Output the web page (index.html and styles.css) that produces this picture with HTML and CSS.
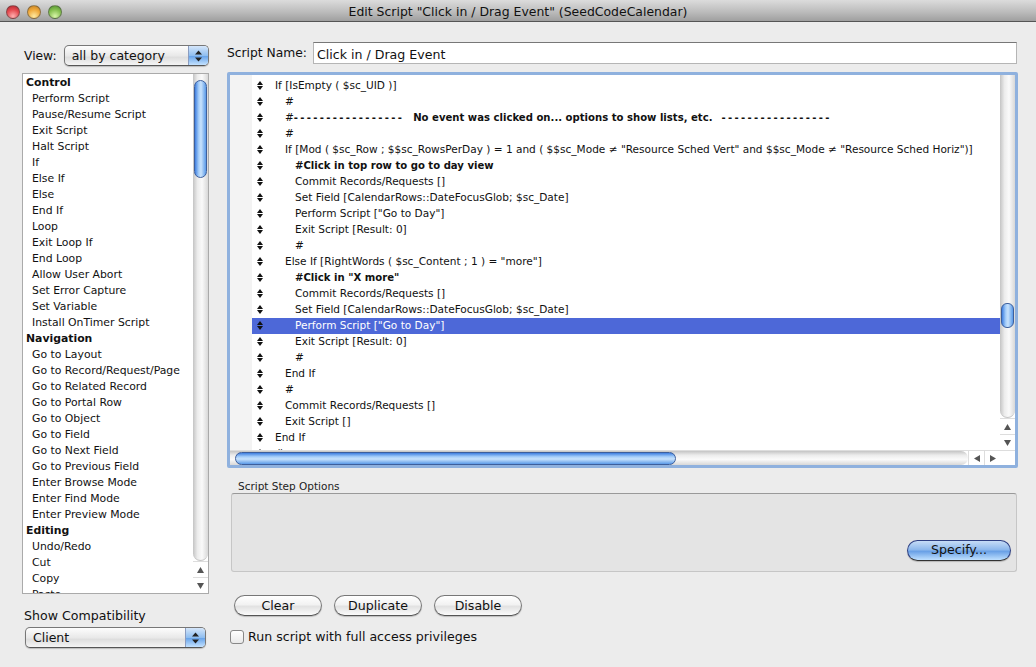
FILE: index.html
```html
<!DOCTYPE html>
<html lang="en">
<head>
<meta charset="utf-8">
<title>Edit Script</title>
<link rel="stylesheet" href="styles.css">
</head>
<body>
<div class="window">
  <header class="titlebar">
    <div class="lights"><span class="light red"></span><span class="light yellow"></span><span class="light green"></span></div>
    <div class="title">Edit Script "Click in / Drag Event" (SeedCodeCalendar)</div>
  </header>
  <main class="content">
    <aside class="left">
      <div class="view-row">
        <span class="label">View:</span>
        <div class="select select-view"><span class="select-text">all by category</span><span class="stepper"><svg width="9" height="14" viewBox="0 0 9 14"><path d="M4.5 1.5 8 5.5H1zM4.5 12.5 8 8.5H1z" fill="#222"/></svg></span></div>
      </div>
      <div class="list">
        <div class="list-items">
          <div class="cat">Control</div>
          <div class="item">Perform Script</div>
          <div class="item">Pause/Resume Script</div>
          <div class="item">Exit Script</div>
          <div class="item">Halt Script</div>
          <div class="item">If</div>
          <div class="item">Else If</div>
          <div class="item">Else</div>
          <div class="item">End If</div>
          <div class="item">Loop</div>
          <div class="item">Exit Loop If</div>
          <div class="item">End Loop</div>
          <div class="item">Allow User Abort</div>
          <div class="item">Set Error Capture</div>
          <div class="item">Set Variable</div>
          <div class="item">Install OnTimer Script</div>
          <div class="cat">Navigation</div>
          <div class="item">Go to Layout</div>
          <div class="item">Go to Record/Request/Page</div>
          <div class="item">Go to Related Record</div>
          <div class="item">Go to Portal Row</div>
          <div class="item">Go to Object</div>
          <div class="item">Go to Field</div>
          <div class="item">Go to Next Field</div>
          <div class="item">Go to Previous Field</div>
          <div class="item">Enter Browse Mode</div>
          <div class="item">Enter Find Mode</div>
          <div class="item">Enter Preview Mode</div>
          <div class="cat">Editing</div>
          <div class="item">Undo/Redo</div>
          <div class="item">Cut</div>
          <div class="item">Copy</div>
          <div class="item">Paste</div>
        </div>
        <div class="vscroll vscroll-list">
          <div class="track"><div class="thumb thumb-list"></div></div>
          <div class="arrow"><svg width="9" height="8" viewBox="0 0 9 8"><path d="M4.5 1 8 7H1z" fill="#555"/></svg></div>
          <div class="arrow"><svg width="9" height="8" viewBox="0 0 9 8"><path d="M1 1H8L4.5 7z" fill="#555"/></svg></div>
        </div>
      </div>
      <div class="compat-label">Show Compatibility</div>
      <div class="select select-compat"><span class="select-text">Client</span><span class="stepper"><svg width="9" height="14" viewBox="0 0 9 14"><path d="M4.5 1.5 8 5.5H1zM4.5 12.5 8 8.5H1z" fill="#222"/></svg></span></div>
    </aside>
    <section class="right">
      <div class="name-row">
        <span class="label">Script Name:</span>
        <div class="name-input">Click in / Drag Event</div>
      </div>
      <div class="script-box">
        <div class="script-top">
          <div class="gutter"></div>
          <div class="steps-wrap">
            <div class="step"><span class="grip"></span><span class="st i0">If [IsEmpty ( $sc_UID )]</span></div>
            <div class="step"><span class="grip"></span><span class="st i1">#</span></div>
            <div class="step"><span class="grip"></span><span class="st i1">#<b class="dash">-----------------</b><b class="note">No event was clicked on... options to show lists, etc.</b><b class="dash dash-end">-----------------</b></span></div>
            <div class="step"><span class="grip"></span><span class="st i1">#</span></div>
            <div class="step"><span class="grip"></span><span class="st i1">If [Mod ( $sc_Row ; $$sc_RowsPerDay ) = 1 and ( $$sc_Mode ≠ "Resource Sched Vert" and $$sc_Mode ≠ "Resource Sched Horiz")]</span></div>
            <div class="step"><span class="grip"></span><span class="st i2"><b class="note">#Click in top row to go to day view</b></span></div>
            <div class="step"><span class="grip"></span><span class="st i2">Commit Records/Requests []</span></div>
            <div class="step"><span class="grip"></span><span class="st i2">Set Field [CalendarRows::DateFocusGlob; $sc_Date]</span></div>
            <div class="step"><span class="grip"></span><span class="st i2">Perform Script ["Go to Day"]</span></div>
            <div class="step"><span class="grip"></span><span class="st i2">Exit Script [Result: 0]</span></div>
            <div class="step"><span class="grip"></span><span class="st i2">#</span></div>
            <div class="step"><span class="grip"></span><span class="st i1">Else If [RightWords ( $sc_Content ; 1 ) = "more"]</span></div>
            <div class="step"><span class="grip"></span><span class="st i2"><b class="note">#Click in "X more"</b></span></div>
            <div class="step"><span class="grip"></span><span class="st i2">Commit Records/Requests []</span></div>
            <div class="step"><span class="grip"></span><span class="st i2">Set Field [CalendarRows::DateFocusGlob; $sc_Date]</span></div>
            <div class="step selected"><span class="grip"></span><span class="st i2">Perform Script ["Go to Day"]</span></div>
            <div class="step"><span class="grip"></span><span class="st i2">Exit Script [Result: 0]</span></div>
            <div class="step"><span class="grip"></span><span class="st i2">#</span></div>
            <div class="step"><span class="grip"></span><span class="st i1">End If</span></div>
            <div class="step"><span class="grip"></span><span class="st i1">#</span></div>
            <div class="step"><span class="grip"></span><span class="st i1">Commit Records/Requests []</span></div>
            <div class="step"><span class="grip"></span><span class="st i1">Exit Script []</span></div>
            <div class="step"><span class="grip"></span><span class="st i0">End If</span></div>
            <div class="step"><span class="grip"></span><span class="st i0">#</span></div>
          </div>
          <div class="vscroll vscroll-script">
            <div class="track"><div class="thumb thumb-script"></div></div>
            <div class="arrow"><svg width="9" height="8" viewBox="0 0 9 8"><path d="M4.5 1 8 7H1z" fill="#555"/></svg></div>
            <div class="arrow"><svg width="9" height="8" viewBox="0 0 9 8"><path d="M1 1H8L4.5 7z" fill="#555"/></svg></div>
          </div>
        </div>
        <div class="hscroll">
          <div class="htrack"><div class="hthumb"></div></div>
          <div class="harrow"><svg width="8" height="9" viewBox="0 0 8 9"><path d="M1 4.5 7 1V8z" fill="#555"/></svg></div>
          <div class="harrow"><svg width="8" height="9" viewBox="0 0 8 9"><path d="M7 4.5 1 1V8z" fill="#555"/></svg></div>
          <div class="corner"></div>
        </div>
      </div>
      <div class="options-label">Script Step Options</div>
      <div class="options-box"><div class="btn btn-specify">Specify...</div></div>
      <div class="btn-row">
        <div class="btn">Clear</div>
        <div class="btn">Duplicate</div>
        <div class="btn">Disable</div>
      </div>
      <div class="check-row"><span class="checkbox"></span><span class="check-label">Run script with full access privileges</span></div>
    </section>
  </main>
</div>
</body>
</html>
```

FILE: styles.css
```css
* { box-sizing: border-box; }
html, body { margin: 0; padding: 0; }
body { width: 1036px; height: 667px; overflow: hidden; background: #ececec; font-family: "DejaVu Sans", Verdana, sans-serif; font-size: 10.85px; color: #111; }
.window { width: 1036px; height: 667px; display: flex; flex-direction: column; }
.titlebar { height: 22px; flex: none; display: flex; align-items: center; position: relative; padding-top: 2px; background: linear-gradient(#dcdcdc, #bdbdbd 55%, #9f9f9f); border-bottom: 1px solid #555; }
.lights { display: flex; gap: 7px; padding-left: 6px; }
.light { width: 14px; height: 14px; border-radius: 50%; border: 1px solid rgba(70,70,70,.55); }
.red { background: radial-gradient(circle at 50% 85%, #ffb0b0, #e44a50 55%, #b0232b); }
.yellow { background: radial-gradient(circle at 50% 85%, #ffe9a0, #f0aa3c 55%, #c07c1c); }
.green { background: radial-gradient(circle at 50% 85%, #d8f5a8, #86c050 55%, #4f8f2c); }
.title { position: absolute; left: 0; right: 0; top: 4px; text-align: center; font-size: 12.45px; line-height: 15px; color: #111; }
.content { flex: 1; display: flex; }
.left { width: 227px; flex: none; padding: 23px 0 0 22px; }
.view-row { display: flex; align-items: center; height: 21px; padding-left: 2px; gap: 7px; }
.label { font-size: 12.3px; }
.select { display: flex; height: 21px; border: 1px solid #777; border-bottom-color: #555; border-radius: 5px; overflow: hidden; background: linear-gradient(#fdfdfd, #e9e9e9 50%, #dedede 60%, #f4f4f4); box-shadow: 0 1px 1px rgba(0,0,0,.2); font-size: 12.5px; }
.select-text { flex: 1; padding-left: 7px; line-height: 20px; }
.stepper { width: 20px; flex: none; display: flex; align-items: center; justify-content: center; background: linear-gradient(#d5e6fa, #8fbef0 50%, #6aa5ea 55%, #c4e2ff); border-left: 1px solid #8a9cc0; }
.select-view { width: 145px; }
.select-compat { width: 181px; margin-left: 3px; }
.list { display: flex; width: 187px; height: 521px; margin-top: 7px; background: #fff; border: 1px solid #aaa; overflow: hidden; }
.list-items { flex: 1; min-width: 0; padding-top: 1px; }
.cat { height: 16px; line-height: 16px; padding-left: 3px; font-weight: bold; }
.item { height: 16px; line-height: 16px; padding-left: 9px; white-space: nowrap; }
.vscroll { width: 15px; flex: none; display: flex; flex-direction: column; background: #fff; }
.track { flex: 1; min-height: 0; padding: 5px 1px 0; border-radius: 0 0 8px 8px; background: linear-gradient(90deg, #c4c4c4, #ececec 30%, #fafafa 60%, #d8d8d8); border-bottom: 1px solid #c4c4c4; }
.thumb { border: 1px solid #3d5f9c; background: linear-gradient(90deg, #3f7fe0, #a8d0fa 35%, #c8e2fc 55%, #5a9ae8); }
.thumb-list { height: 98px; margin-top: 1px; border-radius: 7px; }
.thumb-script { height: 25px; margin-top: 223px; border-radius: 6px; }
.arrow { height: 16px; flex: none; display: flex; align-items: center; justify-content: center; border-top: 1px solid #ddd; }
.compat-label { margin-top: 14px; padding-left: 2px; font-size: 12.6px; line-height: 16px; height: 19px; }
.right { flex: 1; min-width: 0; padding: 20px 18px 0 0; display: flex; flex-direction: column; }
.name-row { display: flex; align-items: center; gap: 6px; height: 22px; }
.name-input { width: 704px; height: 22px; background: #fff; border: 1px solid #b5b5b5; border-top-color: #777; padding-left: 3px; font-size: 12.6px; line-height: 23px; }
.script-box { width: 791px; height: 396px; margin-top: 8px; border: 3px solid #8fb1de; border-radius: 2px; background: #fff; display: flex; flex-direction: column; }
.script-top { flex: 1; min-height: 0; display: flex; }
.gutter { width: 22px; flex: none; background: #f3f3f3; }
.steps-wrap { flex: 1; min-width: 0; padding-top: 3px; overflow: hidden; }
.step { display: flex; align-items: center; height: 16px; padding-bottom: 1px; line-height: 15px; white-space: nowrap; font-size: 10.55px; }
.selected { background: #4d68d8; color: #fff; }
.grip { width: 0; height: 0; margin-left: 5px; position: relative; border-left: 3px solid transparent; border-right: 3px solid transparent; border-bottom: 4px solid #111; margin-top: -5px; }
.grip::after { content: ""; position: absolute; left: -3px; top: 5px; border-left: 3px solid transparent; border-right: 3px solid transparent; border-top: 4px solid #111; }
.st { display: block; }
.i0 { margin-left: 12px; }
.i1 { margin-left: 22px; }
.i2 { margin-left: 32px; }
.note { font-size: 10.1px; }
.dash { font-size: 10.1px; letter-spacing: 2.3px; margin-right: 9px; }
.dash-end { margin-left: 9px; margin-right: 0; }
.hscroll { height: 15px; flex: none; display: flex; background: #fff; border-top: 1px solid #ddd; }
.htrack { flex: 1; padding: 1px 0 1px 5px; background: linear-gradient(#c4c4c4, #ececec 30%, #fafafa 60%, #d8d8d8); border-radius: 0 8px 8px 0; }
.hthumb { width: 441px; height: 13px; border: 1px solid #3d5f9c; border-radius: 7px; background: linear-gradient(#3f7fe0, #a8d0fa 35%, #c8e2fc 55%, #5a9ae8); }
.harrow { width: 16px; flex: none; display: flex; align-items: center; justify-content: center; border-left: 1px solid #ddd; }
.corner { width: 15px; flex: none; }
.options-label { margin: 11px 0 0 11px; font-size: 10.5px; line-height: 14px; color: #222; }
.options-box { width: 786px; height: 79px; margin: 0 0 0 4px; background: #e4e4e4; border: 1px solid #c6c6c6; border-top-color: #999; border-radius: 3px; display: flex; justify-content: flex-end; align-items: flex-end; padding: 0 5px 10px 0; }
.btn { width: 88px; height: 21px; border: 1px solid #777; border-bottom-color: #555; border-radius: 11px; background: linear-gradient(#fff, #f2f2f2 45%, #e2e2e2 55%, #fbfbfb); text-align: center; font-size: 12.6px; line-height: 19px; box-shadow: 0 1px 1px rgba(0,0,0,.2); }
.btn-specify { width: 104px; line-height: 18px; border-color: #2d3f82; border-bottom-color: #333; background: linear-gradient(#c6dcf6, #8db8ec 45%, #6aa1e6 55%, #bfe0ff); }
.btn-row { display: flex; gap: 12px; margin: 23px 0 0 7px; }
.check-row { display: flex; align-items: center; gap: 4px; margin: 13px 0 0 3px; }
.checkbox { width: 14px; height: 14px; border: 1px solid #888; border-radius: 3px; background: linear-gradient(#fff, #e9e9e9); }
.check-label { font-size: 12.6px; line-height: 16px; }
```
